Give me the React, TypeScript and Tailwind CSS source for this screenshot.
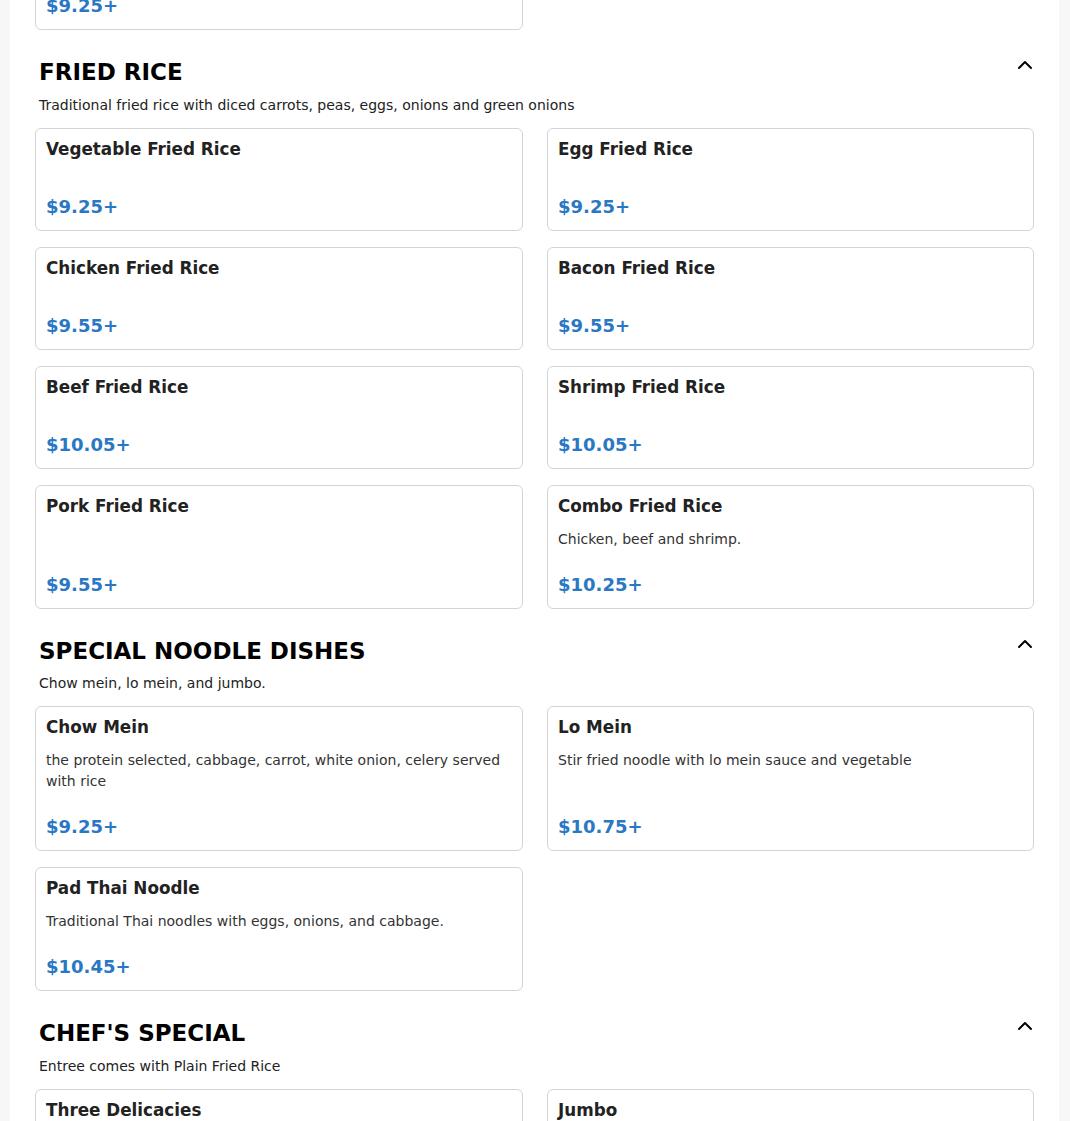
import { ChevronUp } from "lucide-react";

type Item = { name: string; desc?: string; price: string };
type Section = { title: string; note: string; items: Item[] };

const sections: Section[] = [
  {
    title: "FRIED RICE",
    note: "Traditional fried rice with diced carrots, peas, eggs, onions and green onions",
    items: [
      { name: "Vegetable Fried Rice", price: "$9.25+" },
      { name: "Egg Fried Rice", price: "$9.25+" },
      { name: "Chicken Fried Rice", price: "$9.55+" },
      { name: "Bacon Fried Rice", price: "$9.55+" },
      { name: "Beef Fried Rice", price: "$10.05+" },
      { name: "Shrimp Fried Rice", price: "$10.05+" },
      { name: "Pork Fried Rice", price: "$9.55+" },
      { name: "Combo Fried Rice", desc: "Chicken, beef and shrimp.", price: "$10.25+" },
    ],
  },
  {
    title: "SPECIAL NOODLE DISHES",
    note: "Chow mein, lo mein, and jumbo.",
    items: [
      {
        name: "Chow Mein",
        desc: "the protein selected, cabbage, carrot, white onion, celery served with rice",
        price: "$9.25+",
      },
      { name: "Lo Mein", desc: "Stir fried noodle with lo mein sauce and vegetable", price: "$10.75+" },
      {
        name: "Pad Thai Noodle",
        desc: "Traditional Thai noodles with eggs, onions, and cabbage.",
        price: "$10.45+",
      },
    ],
  },
  {
    title: "CHEF'S SPECIAL",
    note: "Entree comes with Plain Fried Rice",
    items: [
      { name: "Three Delicacies", desc: "Chicken, beef and shrimp with mixed vegetables.", price: "$13.95+" },
      { name: "Jumbo", desc: "Jumbo shrimp with mixed vegetables.", price: "$14.95+" },
    ],
  },
];

function MenuCard({ item }: { item: Item }) {
  return (
    <div className="flex flex-col bg-white border border-[#d4d4d4] rounded-md p-[10px]">
      <h4 className="text-[16.8px] font-bold leading-[20px] text-[#222]">{item.name}</h4>
      <p className="mt-[13px] text-[14px] leading-[1.5] text-[#333]">{item.desc}</p>
      <div className="mt-auto pt-[21px] text-[18px] font-bold leading-[27px] text-[#2a77c4]">{item.price}</div>
    </div>
  );
}

function MenuSection({ section }: { section: Section }) {
  return (
    <section className="mt-[23px]">
      <div className="flex items-start justify-between pl-1">
        <div>
          <h2 className="mt-[6px] text-[23px] font-bold leading-[1.2] text-black">{section.title}</h2>
          <p className="mt-[8px] text-[14px] leading-[1.5] text-[#222]">{section.note}</p>
        </div>
        <button className="-mr-[3px] text-black">
          <ChevronUp size={24} strokeWidth={2} />
        </button>
      </div>
      <div className="mt-3 grid grid-cols-[488px_487px] gap-x-6 gap-y-4">
        {section.items.map((item) => (
          <MenuCard key={item.name} item={item} />
        ))}
      </div>
    </section>
  );
}

export default function App() {
  return (
    <div className="min-h-screen bg-[#f7f7f7] font-['DejaVu_Sans',sans-serif]">
      <div className="ml-[10px] w-[1049px] bg-white px-[25px] pb-10 overflow-hidden">
        {/* tail of the previous category, scrolled off the top */}
        <div className="-mt-[73px] grid grid-cols-[488px_487px] gap-x-6">
          <MenuCard item={{ name: "Plain Fried Rice", price: "$9.25+" }} />
        </div>
        {sections.map((s) => (
          <MenuSection key={s.title} section={s} />
        ))}
      </div>
    </div>
  );
}
